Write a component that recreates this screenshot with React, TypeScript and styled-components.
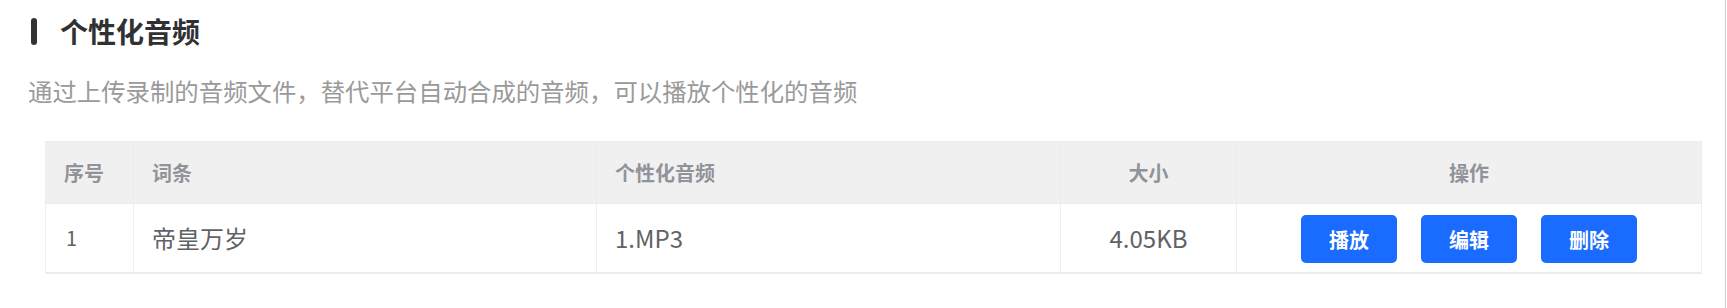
import React from 'react';
import styled, {createGlobalStyle} from "styled-components";

const GlobalStyle = createGlobalStyle`
  html, body {
    margin: 0;
    padding: 0;
    background: #fff;
  }
  body {
    font-family: "Noto Sans CJK SC", "Noto Sans", sans-serif;
  }
`

type AudioRow = {
    id: number
    word: string
    file: string
    size: string
}

const rows: AudioRow[] = [
    {id: 1, word: "帝皇万岁", file: "1.MP3", size: "4.05KB"},
]

const actions = ["播放", "编辑", "删除"]

export default function App() {
    return (<>
            <GlobalStyle/>
            <Page>
                <TitleRow>
                    <TitleBar/>
                    <Title>个性化音频</Title>
                </TitleRow>
                <Subtitle>通过上传录制的音频文件，替代平台自动合成的音频，可以播放个性化的音频</Subtitle>
                <Table>
                    <colgroup>
                        <col style={{width: 88}}/>
                        <col style={{width: 463}}/>
                        <col style={{width: 464}}/>
                        <col style={{width: 176}}/>
                        <col style={{width: 465}}/>
                    </colgroup>
                    <thead>
                    <tr>
                        <HeadCell>序号</HeadCell>
                        <HeadCell>词条</HeadCell>
                        <HeadCell>个性化音频</HeadCell>
                        <HeadCell align="center">大小</HeadCell>
                        <HeadCell align="center">操作</HeadCell>
                    </tr>
                    </thead>
                    <tbody>
                    {rows.map(row => (
                        <tr key={row.id}>
                            <IndexCell>{row.id}</IndexCell>
                            <BodyCell>{row.word}</BodyCell>
                            <BodyCell>{row.file}</BodyCell>
                            <BodyCell align="center">{row.size}</BodyCell>
                            <BodyCell align="center">
                                <Actions>
                                    {actions.map(a => <ActionBtn key={a}>{a}</ActionBtn>)}
                                </Actions>
                            </BodyCell>
                        </tr>
                    ))}
                    </tbody>
                </Table>
            </Page>
        </>
    );
}

const Page = styled.div`
  box-sizing: border-box;
  width: 1726px;
  min-height: 308px;
  padding: 15px 24px 0 28px;
  border-right: 1px solid #cfcfcf;
`

const TitleRow = styled.div`
  display: flex;
  align-items: center;
  height: 33px;
  padding-left: 3px;
`

const TitleBar = styled.span`
  display: block;
  width: 6px;
  height: 27px;
  border-radius: 3px;
  background: #333;
  margin-right: 23px;
`

const Title = styled.h2`
  margin: 0;
  font-size: 28px;
  line-height: 33px;
  font-weight: 700;
  color: #303133;
`

const Subtitle = styled.p`
  margin: 26px 0 0 0;
  font-size: 24.4px;
  line-height: 34px;
  color: #9a9a9a;
`

const Table = styled.table`
  margin: 33px 0 0 17px;
  width: 1656px;
  table-layout: fixed;
  border-collapse: collapse;
  border-left: 1px solid #ebeef5;
  border-bottom: 2px solid #e9ecf2;
`

const HeadCell = styled.th<{ align?: "left" | "center" }>`
  height: 62px;
  padding: 0 18px;
  box-sizing: border-box;
  background: #f0f0f0;
  border: 1px solid #e9ecf2;
  border-left: none;
  text-align: ${p => p.align ?? "left"};
  font-size: 20px;
  font-weight: 700;
  color: #909399;
`

const BodyCell = styled.td<{ align?: "left" | "center" }>`
  height: 69px;
  padding: 0 18px;
  box-sizing: border-box;
  border-right: 1px solid #ebeef5;
  border-bottom: 1px solid #ebeef5;
  text-align: ${p => p.align ?? "left"};
  font-size: 24px;
  color: #606266;
`

const IndexCell = styled(BodyCell)`
  font-size: 20px;
  padding-left: 20px;
`

const Actions = styled.div`
  display: flex;
  justify-content: center;
  gap: 24px;
  padding-top: 3px;
`

const ActionBtn = styled.button`
  width: 96px;
  height: 48px;
  border: none;
  border-radius: 5px;
  background: #1a6bff;
  color: #fff;
  font-family: "Noto Sans CJK SC", sans-serif;
  font-size: 20px;
  font-weight: 700;
  cursor: pointer;
`
